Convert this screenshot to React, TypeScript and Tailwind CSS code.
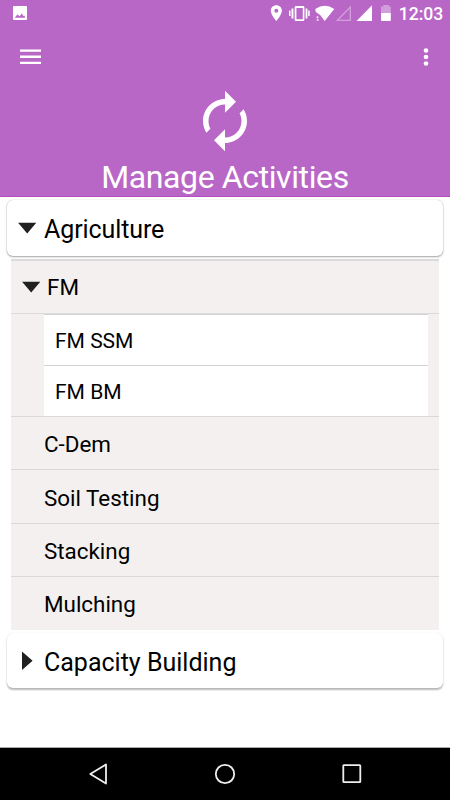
import type { ReactNode } from 'react';

function StatusBar() {
  return (
    <div className="flex h-[27px] w-full shrink-0 text-white">
      <svg className="ml-[13px] h-[27px] w-[14px]" viewBox="0 0 14 27" fill="currentColor">
        <path fillRule="evenodd" d="M1 6H13Q14 6 14 7V19Q14 20 13 20H1Q0 20 0 19V7Q0 6 1 6ZM1.6 17.7H12.2L11.5 15.6L10.4 16.2L8.9 13.2L6.8 16.3L4.5 14.5Z" />
      </svg>
      <svg className="ml-[243px] h-[27px] w-[180px]" viewBox="270 0 180 27" fill="currentColor">
        <path fillRule="evenodd" d="M276.3 5.3C273.2 5.3 270.8 7.7 270.8 10.7C270.8 14.7 276.3 21 276.3 21S281.9 14.7 281.9 10.7C281.9 7.7 279.4 5.3 276.3 5.3ZM276.3 8.8A2 2 0 1 1 276.3 12.8A2 2 0 1 1 276.3 8.8Z" />
        <path fillRule="evenodd" d="M296 6H303Q304.4 6 304.4 7.3V19.8Q304.4 21 303 21H296Q294.7 21 294.7 19.8V7.3Q294.7 6 296 6ZM296.4 8V19.2H302.8V8Z" />
        <path d="M291.5 8.5H293.4V18.5H291.5ZM289 10.5H290.5V16H289ZM305.6 8.5H307.4V18.5H305.6ZM308.2 10.5H309.7V16H308.2Z" />
        <path d="M315.3 9Q324.8 2.5 334.2 9L324.7 21L320.4 15.3L315.8 12Z" />
        <path d="M317.5 15.8L318.7 17.3L317.5 18.7L316.2 17.3ZM316.7 19.2H318.7V20.7H316.7Z" opacity=".8" />
        <path d="M337.4 20.3H350.3V7.1Z" fill="none" stroke="currentColor" strokeWidth="1.3" opacity=".38" />
        <path d="M356.6 21H372V5.2Z" />
        <path d="M383.3 5H388.8V6.5H390.8V13H381V6.5H383.3Z" opacity=".36" />
        <path d="M381 13H390.8V20.3Q390.8 21 390 21H381.8Q381 21 381 20.3Z" />
        <text x="398.8" y="20" fontSize="17.6" fontWeight="500" fontFamily="Roboto, sans-serif" textLength="44.5">12:03</text>
      </svg>
    </div>
  );
}

function Arrow({ open }: { open?: boolean }) {
  return open ? (
    <svg className="h-[12px] w-[20px] shrink-0" viewBox="0 0 20 12" fill="#202020"><path d="M.1 .8H18.3L9.2 11.4Z" /></svg>
  ) : (
    <svg className="h-[20px] w-[12px] shrink-0" viewBox="0 0 12 20" fill="#202020"><path d="M0 .6V19L10.6 9.8Z" /></svg>
  );
}

function Row({ children }: { children: ReactNode }) {
  return <div className="flex h-[53.3px] items-center border-t border-[#d9d8d8] pt-[2.6px] pl-[33px] text-[22.4px] leading-none">{children}</div>;
}

export default function App() {
  return (
    <main className="flex h-[800px] w-[450px] flex-col overflow-hidden bg-white font-['Roboto',sans-serif] text-black">
      <header className="flex h-[197px] shrink-0 flex-col items-center border-b border-[#b44cc2] bg-[#b967c7] text-white">
        <StatusBar />
        <div className="flex h-[61px] w-full shrink-0 items-center justify-between pr-[21px] pb-[2px] pl-5">
          <svg className="h-[16px] w-[21px]" viewBox="0 0 21 16" fill="currentColor"><path d="M0 .5H21V2.8H0ZM0 6.6H21V8.9H0ZM0 12.7H21V15H0Z" /></svg>
          <svg className="h-[20px] w-[6px]" viewBox="0 0 6 20" fill="currentColor"><circle cx="3" cy="3.5" r="2.3" /><circle cx="3" cy="10" r="2.3" /><circle cx="3" cy="16.5" r="2.3" /></svg>
        </div>
        <svg className="h-[66px] w-[66px] shrink-0" viewBox="0 0 24 24" fill="currentColor">
          <path d="M12 6v3l4-4-4-4v3c-4.42 0-8 3.58-8 8 0 1.57.46 3.03 1.24 4.26L6.7 14.8c-.45-.83-.7-1.79-.7-2.8 0-3.31 2.69-6 6-6zm6.76 1.74L17.3 9.2c.44.84.7 1.79.7 2.8 0 3.31-2.69 6-6 6v-3l-4 4 4 4v-3c4.42 0 8-3.58 8-8 0-1.57-.46-3.03-1.24-4.26z" />
        </svg>
        <h1 className="mt-[4px] text-[32px] leading-[38px] tracking-[-0.39px] whitespace-nowrap">Manage Activities</h1>
      </header>

      <section className="mx-[7px] mt-[3px] flex h-[56px] shrink-0 items-center rounded-[6px] bg-white pl-[11px] text-[25px] leading-none shadow-[0_0_1px_rgba(0,0,0,0.25),0_1px_2px_rgba(0,0,0,0.35)]">
        <Arrow open />
        <span className="ml-[6px] pt-[2px] tracking-[-0.1px]">Agriculture</span>
      </section>

      <div className="mr-[11px] ml-[11px] mt-[3px] h-[370.5px] shrink-0 bg-[#f3f0ef]">
        <div className="flex h-[55px] items-center border-t-2 border-b border-[#dcdbdb] pl-[11px] text-[22.4px] leading-none">
          <Arrow open />
          <span className="ml-[5px]">FM</span>
        </div>
        <div className="mr-[11px] ml-[33px] h-[102px] bg-white text-[21px] leading-none">
          <div className="flex h-[52px] items-center border-t border-b border-[#d3d3d3] pl-[11px] pt-[2px]">FM SSM</div>
          <div className="flex h-[50px] items-center pl-[11px] pt-[2px]">FM BM</div>
        </div>
        <Row>C-Dem</Row>
        <Row>Soil Testing</Row>
        <Row>Stacking</Row>
        <Row>Mulching</Row>
      </div>

      <section className="mx-[7px] mt-[3.5px] flex h-[55px] shrink-0 items-center rounded-[6px] bg-white pl-[15px] text-[25px] leading-none shadow-[0_0_1px_rgba(0,0,0,0.15),0_2px_2px_rgba(0,0,0,0.28)]">
        <Arrow />
        <span className="ml-[10px] pt-[3px]">Capacity Building</span>
      </section>

      <nav className="mt-auto flex h-[53px] shrink-0 items-center border-t border-[#aaa] bg-black pl-[88px] text-[#eee]">
        <svg className="h-[22px] w-[20px]" viewBox="0 0 20 22" fill="none" stroke="currentColor" strokeWidth="1.8" strokeLinejoin="round"><path d="M18 1.5V20.5L2.3 11Z" /></svg>
        <svg className="ml-[106px] h-[22px] w-[22px]" viewBox="0 0 22 22" fill="none" stroke="currentColor" strokeWidth="1.8"><circle cx="11" cy="11" r="9.2" /></svg>
        <svg className="ml-[106px] h-[20px] w-[20px]" viewBox="0 0 20 20" fill="none" stroke="currentColor" strokeWidth="1.8"><rect x="1.3" y="1.2" width="17" height="17" rx=".6" /></svg>
      </nav>
    </main>
  );
}
